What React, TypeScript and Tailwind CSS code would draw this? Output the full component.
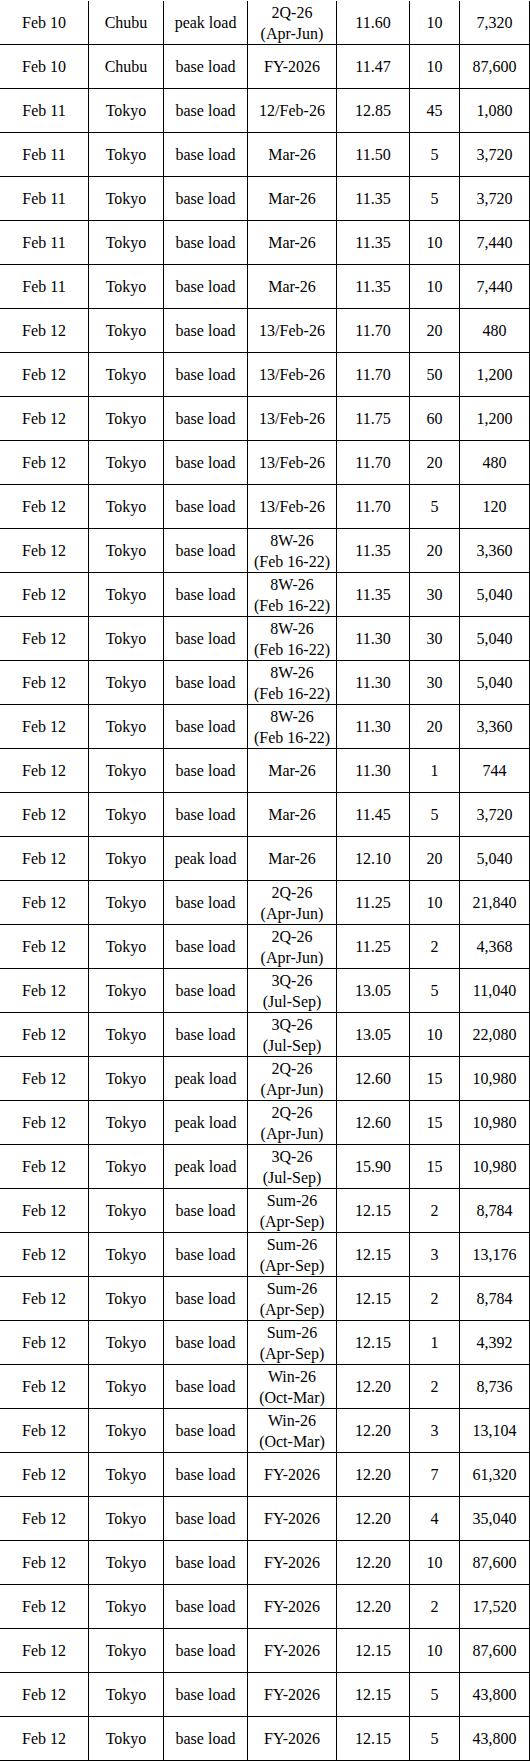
const rows: [string, string, string, string, string, string, string][] = [
  ['Feb 10', 'Chubu', 'peak load', '2Q-26\n(Apr-Jun)', '11.60', '10', '7,320'],
  ['Feb 10', 'Chubu', 'base load', 'FY-2026', '11.47', '10', '87,600'],
  ['Feb 11', 'Tokyo', 'base load', '12/Feb-26', '12.85', '45', '1,080'],
  ['Feb 11', 'Tokyo', 'base load', 'Mar-26', '11.50', '5', '3,720'],
  ['Feb 11', 'Tokyo', 'base load', 'Mar-26', '11.35', '5', '3,720'],
  ['Feb 11', 'Tokyo', 'base load', 'Mar-26', '11.35', '10', '7,440'],
  ['Feb 11', 'Tokyo', 'base load', 'Mar-26', '11.35', '10', '7,440'],
  ['Feb 12', 'Tokyo', 'base load', '13/Feb-26', '11.70', '20', '480'],
  ['Feb 12', 'Tokyo', 'base load', '13/Feb-26', '11.70', '50', '1,200'],
  ['Feb 12', 'Tokyo', 'base load', '13/Feb-26', '11.75', '60', '1,200'],
  ['Feb 12', 'Tokyo', 'base load', '13/Feb-26', '11.70', '20', '480'],
  ['Feb 12', 'Tokyo', 'base load', '13/Feb-26', '11.70', '5', '120'],
  ['Feb 12', 'Tokyo', 'base load', '8W-26\n(Feb 16-22)', '11.35', '20', '3,360'],
  ['Feb 12', 'Tokyo', 'base load', '8W-26\n(Feb 16-22)', '11.35', '30', '5,040'],
  ['Feb 12', 'Tokyo', 'base load', '8W-26\n(Feb 16-22)', '11.30', '30', '5,040'],
  ['Feb 12', 'Tokyo', 'base load', '8W-26\n(Feb 16-22)', '11.30', '30', '5,040'],
  ['Feb 12', 'Tokyo', 'base load', '8W-26\n(Feb 16-22)', '11.30', '20', '3,360'],
  ['Feb 12', 'Tokyo', 'base load', 'Mar-26', '11.30', '1', '744'],
  ['Feb 12', 'Tokyo', 'base load', 'Mar-26', '11.45', '5', '3,720'],
  ['Feb 12', 'Tokyo', 'peak load', 'Mar-26', '12.10', '20', '5,040'],
  ['Feb 12', 'Tokyo', 'base load', '2Q-26\n(Apr-Jun)', '11.25', '10', '21,840'],
  ['Feb 12', 'Tokyo', 'base load', '2Q-26\n(Apr-Jun)', '11.25', '2', '4,368'],
  ['Feb 12', 'Tokyo', 'base load', '3Q-26\n(Jul-Sep)', '13.05', '5', '11,040'],
  ['Feb 12', 'Tokyo', 'base load', '3Q-26\n(Jul-Sep)', '13.05', '10', '22,080'],
  ['Feb 12', 'Tokyo', 'peak load', '2Q-26\n(Apr-Jun)', '12.60', '15', '10,980'],
  ['Feb 12', 'Tokyo', 'peak load', '2Q-26\n(Apr-Jun)', '12.60', '15', '10,980'],
  ['Feb 12', 'Tokyo', 'peak load', '3Q-26\n(Jul-Sep)', '15.90', '15', '10,980'],
  ['Feb 12', 'Tokyo', 'base load', 'Sum-26\n(Apr-Sep)', '12.15', '2', '8,784'],
  ['Feb 12', 'Tokyo', 'base load', 'Sum-26\n(Apr-Sep)', '12.15', '3', '13,176'],
  ['Feb 12', 'Tokyo', 'base load', 'Sum-26\n(Apr-Sep)', '12.15', '2', '8,784'],
  ['Feb 12', 'Tokyo', 'base load', 'Sum-26\n(Apr-Sep)', '12.15', '1', '4,392'],
  ['Feb 12', 'Tokyo', 'base load', 'Win-26\n(Oct-Mar)', '12.20', '2', '8,736'],
  ['Feb 12', 'Tokyo', 'base load', 'Win-26\n(Oct-Mar)', '12.20', '3', '13,104'],
  ['Feb 12', 'Tokyo', 'base load', 'FY-2026', '12.20', '7', '61,320'],
  ['Feb 12', 'Tokyo', 'base load', 'FY-2026', '12.20', '4', '35,040'],
  ['Feb 12', 'Tokyo', 'base load', 'FY-2026', '12.20', '10', '87,600'],
  ['Feb 12', 'Tokyo', 'base load', 'FY-2026', '12.20', '2', '17,520'],
  ['Feb 12', 'Tokyo', 'base load', 'FY-2026', '12.15', '10', '87,600'],
  ['Feb 12', 'Tokyo', 'base load', 'FY-2026', '12.15', '5', '43,800'],
  ['Feb 12', 'Tokyo', 'base load', 'FY-2026', '12.15', '5', '43,800'],
];

export default function App() {
  return (
    <div className="w-[530px] bg-white pt-px text-black font-['Liberation_Serif',serif] text-[16px] leading-[21px]">
      {rows.map((row, i) => (
        <div
          key={i}
          className="grid h-[44px] grid-cols-[89px_75px_84px_89px_73px_50px_70px] border-b border-black"
        >
          {row.map((cell, j) => (
            <div
              key={j}
              className="flex flex-col items-center justify-center border-r border-black text-center whitespace-nowrap"
            >
              {cell.split('\n').map((line, k) => (
                <span key={k}>{line}</span>
              ))}
            </div>
          ))}
        </div>
      ))}
    </div>
  );
}
